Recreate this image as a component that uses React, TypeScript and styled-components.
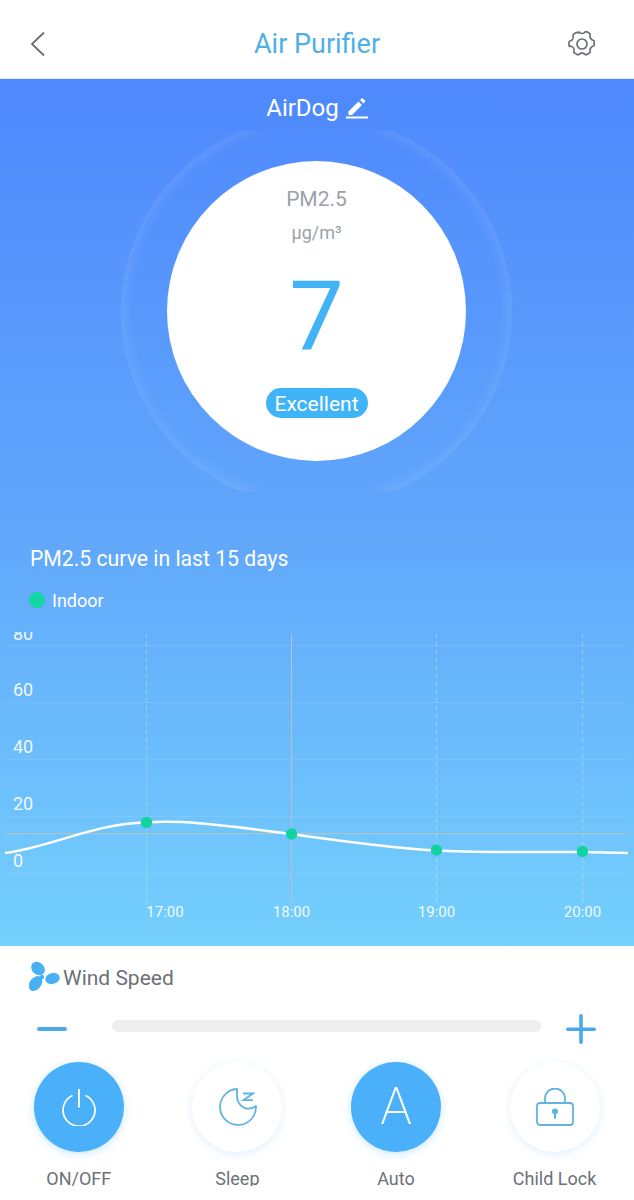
import React from 'react';
import styled, { createGlobalStyle } from 'styled-components';

const GlobalStyle = createGlobalStyle`
  html, body {
    margin: 0;
    padding: 0;
    background: #fff;
    font-family: Roboto, "Liberation Sans", sans-serif;
  }
  * {
    box-sizing: border-box;
  }
`;

const Page = styled.div`
  width: 634px;
  height: 1186px;
  overflow: hidden;
  background: #fff;
`;

const Header = styled.header`
  height: 79px;
  display: grid;
  grid-template-columns: 1fr auto 1fr;
  align-items: center;
  padding: 9px 30px 0;
  border-bottom: 1px solid #dbeafc;
`;

const HeaderSide = styled.div<{ $end?: boolean }>`
  display: flex;
  justify-content: ${(p) => (p.$end ? 'flex-end' : 'flex-start')};
  padding-right: ${(p) => (p.$end ? '8px' : '0')};
`;

const HeaderTitle = styled.h1`
  margin: 0;
  font-size: 27px;
  font-weight: 400;
  color: #4fb0e6;
`;

const Hero = styled.section`
  height: 867px;
  padding-top: 14px;
  background: linear-gradient(180deg, #4e88fd 0%, #62a9fb 55%, #74d0fc 100%);
  color: #fff;
`;

const NameRow = styled.div`
  height: 30px;
  display: flex;
  align-items: center;
  justify-content: center;
  gap: 7px;
  font-size: 24px;
  line-height: 30px;
`;

const Gauge = styled.div`
  position: relative;
  height: 360px;
  margin-top: 8px;
  padding-right: 1px;
  display: flex;
  align-items: center;
  justify-content: center;
  overflow: hidden;
`;

const GaugeRing = styled.div`
  position: absolute;
  top: -16px;
  left: 120px;
  width: 393px;
  height: 393px;
  border-radius: 50%;
  background: radial-gradient(
    closest-side,
    rgba(255, 255, 255, 0) 93%,
    rgba(255, 255, 255, 0.03) 96%,
    rgba(255, 255, 255, 0.08) 99%,
    rgba(255, 255, 255, 0) 100%
  );
`;

const GaugeFace = styled.div`
  position: relative;
  width: 299px;
  height: 300px;
  border-radius: 50%;
  background: #fff;
  display: flex;
  flex-direction: column;
  align-items: center;
  padding-top: 25px;
`;

const GaugeLabel = styled.div`
  font-size: 21px;
  line-height: 26px;
  color: #9aa2a9;
`;

const GaugeUnit = styled.div`
  margin-top: 10px;
  font-size: 18px;
  line-height: 22px;
  color: #9aa2a9;
`;

const GaugeValue = styled.div`
  margin-top: 18px;
  font-size: 97px;
  font-weight: 400;
  line-height: 110px;
  color: #42b4f6;
`;

const Badge = styled.div`
  margin-top: 16px;
  width: 102px;
  height: 30px;
  border-radius: 15px;
  background: #40b4f8;
  color: #fff;
  font-size: 21px;
  line-height: 33px;
  text-align: center;
`;

const CurveTitle = styled.h2`
  margin: 55px 0 0;
  padding-left: 30px;
  font-size: 21.2px;
  font-weight: 400;
  line-height: 26px;
`;

const Legend = styled.div`
  margin-top: 18px;
  padding-left: 29px;
  height: 20px;
  display: flex;
  align-items: center;
  gap: 7px;
  font-size: 18px;
`;

const LegendDot = styled.span`
  width: 16px;
  height: 16px;
  border-radius: 50%;
  background: #12d6a3;
`;

const ChartSvg = styled.svg`
  display: block;
  margin-top: 22px;
  width: 634px;
  height: 314px;
  overflow: hidden;
`;

const AxisText = styled.text<{ $size: number }>`
  font-family: Roboto, "Liberation Sans", sans-serif;
  font-size: ${(p) => p.$size}px;
  fill: rgba(255, 255, 255, 0.92);
`;

const Panel = styled.section`
  height: 240px;
  padding-top: 15px;
  background: #fff;
`;

const WindRow = styled.div`
  height: 30px;
  padding-left: 29px;
  display: flex;
  align-items: center;
  gap: 3px;
  font-size: 21px;
  color: #6d7177;
`;

const WindText = styled.span`
  position: relative;
  top: 2px;
`;

const SliderRow = styled.div`
  margin-top: 23px;
  height: 30px;
  padding: 0 38px 0 37px;
  display: flex;
  align-items: center;
`;

const Track = styled.div`
  flex: 1;
  height: 12px;
  margin: -6px 25px 0 45px;
  border-radius: 6px;
  background: #eeeeee;
`;

const Controls = styled.div`
  margin: 18px 0 0 -0.5px;
  display: grid;
  grid-template-columns: repeat(4, 158.6px);
`;

const Control = styled.div`
  display: flex;
  flex-direction: column;
  align-items: center;
  gap: 16px;
`;

const ControlButton = styled.button<{ $active?: boolean }>`
  width: 90px;
  height: 90px;
  padding: 0;
  border: none;
  border-radius: 50%;
  display: flex;
  align-items: center;
  justify-content: center;
  cursor: pointer;
  color: ${(p) => (p.$active ? '#fff' : '#5fb4e2')};
  background: ${(p) => (p.$active ? '#4ab0fa' : '#fff')};
  box-shadow: 0 2px 8px rgba(90, 175, 245, ${(p) => (p.$active ? 0.3 : 0.2)});
`;

const AutoGlyph = styled.span`
  font-family: Roboto, "Liberation Sans", sans-serif;
  font-size: 52px;
  font-weight: 200;
  line-height: 52px;
`;

const ControlLabel = styled.div`
  font-size: 18px;
  line-height: 22px;
  color: #6d7177;
  white-space: nowrap;
`;

const BackIcon = () => (
  <svg width="15" height="26" viewBox="0 0 15 26" fill="none">
    <path d="M14 1.5 2 13l12 11.5" stroke="#6a6e73" strokeWidth="1.8" />
  </svg>
);

const GearIcon = () => (
  <svg width="28" height="28" viewBox="0 0 28 28" fill="none" stroke="#6a6e73" strokeWidth="1.7">
    <path d="M11 2.6c1.6 1.6 4.4 1.6 6 0 .5-.5 1.2-.6 1.8-.3l2.6 1.5c.6.3.9 1 .7 1.7-.6 2.2.8 4.600 3 5.200.7.2 1.100.8 1.100 1.500v3.000c0 .7-.4 1.300-1.100 1.500-2.200.6-3.600 3-3 5.200.2.7-.1 1.400-.7 1.700l-2.600 1.500c-.6.3-1.300.2-1.800-.3-1.600-1.600-4.400-1.600-6 0-.5.5-1.200.6-1.800.3l-2.600-1.500c-.6-.3-.9-1-.7-1.700.6-2.200-.8-4.600-3-5.200C1.400 17.300 1 16.700 1 16v-3c0-.7.4-1.300 1.100-1.500 2.200-.6 3.600-3 3-5.200-.2-.7.1-1.400.7-1.700l2.600-1.500c.6-.3 1.300-.2 1.800.3Z" transform="translate(0 -.5)" />
    <circle cx="14" cy="14" r="5" />
  </svg>
);

const EditIcon = () => (
  <svg width="22" height="22" viewBox="0 0 22 22" fill="#fff">
    <path d="M2.500 14.500 12.500 4.500l3.500 3.500-10 10H2.500Z" />
    <path d="m14 3 1.600-1.600a1 1 0 0 1 1.400 0l2 2a1 1 0 0 1 0 1.400L17.500 6.500Z" />
    <rect x="0" y="19.500" width="22" height="2" />
  </svg>
);

const FanIcon = () => (
  <svg width="31" height="31" viewBox="0 0 31 31" fill="#4ab0f5">
    <ellipse cx="9" cy="7.500" rx="7.500" ry="6" transform="rotate(42 9 7.500)" />
    <ellipse cx="23.500" cy="17.500" rx="7.300" ry="5.500" transform="rotate(-14 23.500 17.500)" />
    <ellipse cx="6.500" cy="22.500" rx="5.800" ry="8.200" transform="rotate(36 6.500 22.500)" />
    <circle cx="13" cy="16" r="2.200" />
  </svg>
);

const MinusIcon = () => (
  <svg width="30" height="30" viewBox="0 0 30 30" fill="#4aa9e8">
    <rect x="0" y="13" width="30" height="4" rx="2" />
  </svg>
);

const PlusIcon = () => (
  <svg width="30" height="30" viewBox="0 0 30 30" fill="#4aa9e8">
    <rect x="0" y="13.500" width="30" height="3.600" rx="1.800" />
    <rect x="13.200" y="0" width="3.600" height="30" rx="1.800" />
  </svg>
);

const PowerIcon = () => (
  <svg width="36" height="38" viewBox="0 0 36 38" fill="none" stroke="#fff" strokeWidth="1.700">
    <path d="M11.500 7.500a16 16 0 1 0 13 0" />
    <path d="M18 1v18.500" strokeWidth="1.900" />
  </svg>
);

const SleepIcon = () => (
  <svg width="39" height="38" viewBox="0 0 39 38" fill="none" stroke="currentColor" strokeWidth="1.800">
    <path d="M19 1a18 18 0 1 0 19 17c-2 1.800-4.500 2.700-7.500 2.700C24 20.700 19 14.500 19 8.500c0-2.800 0-5 0-7.500Z" strokeLinejoin="round" />
    <path d="M25 5.500h10l-9.500 6.700H35" />
  </svg>
);

const LockIcon = () => (
  <svg width="38" height="38" viewBox="0 0 38 38" fill="none" stroke="currentColor" strokeWidth="1.800">
    <rect x="1" y="15" width="36" height="22" rx="3" />
    <path d="M9 15V10.500a10 10 0 0 1 20 0V15" />
    <circle cx="19" cy="23.500" r="3" fill="currentColor" stroke="none" />
    <rect x="18" y="24" width="2" height="7" rx="1" fill="currentColor" stroke="none" />
  </svg>
);

const gridY = [645.5, 702.5, 759.5, 816.5, 873.5];
const yLabels = [
  { text: '80', y: 640 },
  { text: '60', y: 696 },
  { text: '40', y: 753 },
  { text: '20', y: 810 },
  { text: '0', y: 867 },
];
const points = [
  { x: 146.5, y: 822.5, time: '17:00', labelX: 165, dashed: true },
  { x: 291.5, y: 834, time: '18:00', labelX: 291.5, dashed: false },
  { x: 436.5, y: 850, time: '19:00', labelX: 436.5, dashed: true },
  { x: 582.5, y: 851.5, time: '20:00', labelX: 582.5, dashed: true },
];

const Chart = () => (
  <ChartSvg viewBox="0 632 634 314">
    {gridY.map((y) => (
      <line key={y} x1="5" x2="628" y1={y} y2={y} stroke="rgba(255,255,255,0.1)" />
    ))}
    {points.map((p) =>
      p.dashed ? (
        <line
          key={p.x}
          x1={p.x}
          x2={p.x}
          y1="634"
          y2="904"
          stroke="rgba(255,255,255,0.28)"
          strokeDasharray="5 3"
        />
      ) : (
        <line key={p.x} x1={p.x} x2={p.x} y1="634" y2="904" stroke="#b9c1c6" />
      ),
    )}
    <line x1="5" x2="628" y1="833.5" y2="833.5" stroke="#b4c4be" />
    <path
      d="M5 853C45 849 95 823 146 822.500C175 820 210 823 291 834C340 841 390 848 436 850.500C470 852.500 530 852 582 852L628 853"
      fill="none"
      stroke="#fff"
      strokeWidth="2.500"
    />
    {points.map((p) => (
      <circle key={p.x} cx={p.x} cy={p.y} r="5.700" fill="#12d29f" />
    ))}
    {yLabels.map((l) => (
      <AxisText key={l.text} $size={18} x="13" y={l.y}>
        {l.text}
      </AxisText>
    ))}
    {points.map((p) => (
      <AxisText key={p.time} $size={15} x={p.labelX} y="917" textAnchor="middle">
        {p.time}
      </AxisText>
    ))}
  </ChartSvg>
);

const App: React.FC = () => (
  <Page>
    <GlobalStyle />
    <Header>
      <HeaderSide>
        <BackIcon />
      </HeaderSide>
      <HeaderTitle>Air Purifier</HeaderTitle>
      <HeaderSide $end>
        <GearIcon />
      </HeaderSide>
    </Header>
    <Hero>
      <NameRow>
        AirDog <EditIcon />
      </NameRow>
      <Gauge>
        <GaugeRing />
        <GaugeFace>
          <GaugeLabel>PM2.5</GaugeLabel>
          <GaugeUnit>μg/m³</GaugeUnit>
          <GaugeValue>7</GaugeValue>
          <Badge>Excellent</Badge>
        </GaugeFace>
      </Gauge>
      <CurveTitle>PM2.5 curve in last 15 days</CurveTitle>
      <Legend>
        <LegendDot />
        Indoor
      </Legend>
      <Chart />
    </Hero>
    <Panel>
      <WindRow>
        <FanIcon />
        <WindText>Wind Speed</WindText>
      </WindRow>
      <SliderRow>
        <MinusIcon />
        <Track />
        <PlusIcon />
      </SliderRow>
      <Controls>
        <Control>
          <ControlButton $active>
            <PowerIcon />
          </ControlButton>
          <ControlLabel>ON/OFF</ControlLabel>
        </Control>
        <Control>
          <ControlButton>
            <SleepIcon />
          </ControlButton>
          <ControlLabel>Sleep</ControlLabel>
        </Control>
        <Control>
          <ControlButton $active>
            <AutoGlyph>A</AutoGlyph>
          </ControlButton>
          <ControlLabel>Auto</ControlLabel>
        </Control>
        <Control>
          <ControlButton>
            <LockIcon />
          </ControlButton>
          <ControlLabel>Child Lock</ControlLabel>
        </Control>
      </Controls>
    </Panel>
  </Page>
);

export default App;
